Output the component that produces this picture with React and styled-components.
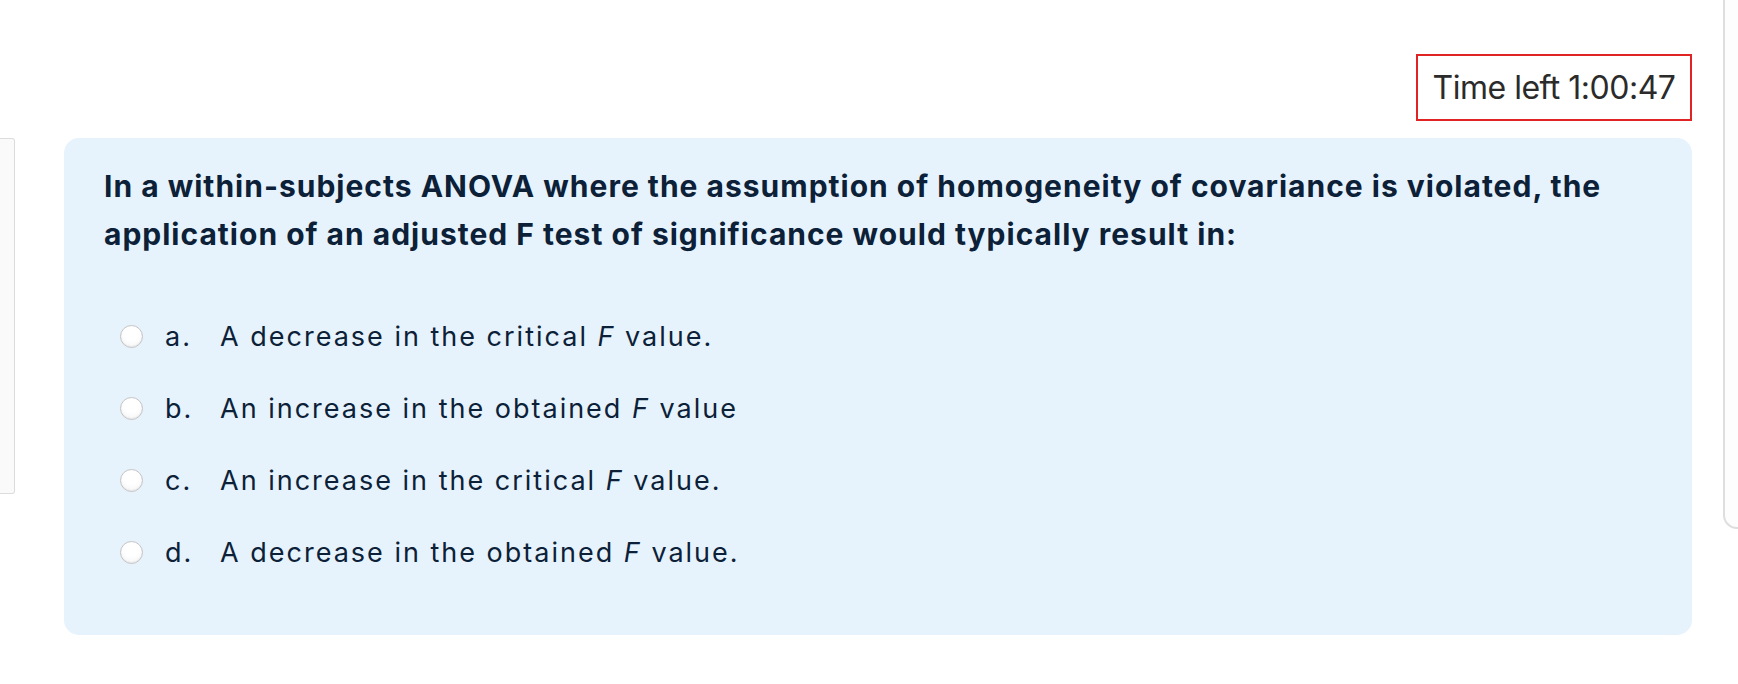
import React from 'react';
import styled, { createGlobalStyle } from 'styled-components';

const GlobalStyle = createGlobalStyle`
  html, body {
    margin: 0;
    padding: 0;
    background: #ffffff;
  }
  body {
    font-family: Inter, "Noto Sans", sans-serif;
  }
`;

const Page = styled.div`
  display: flex;
  align-items: flex-start;
  width: 100%;
  height: 684px;
  overflow: hidden;
`;

const DrawerStub = styled.div`
  flex: 0 0 14px;
  height: 354px;
  margin-top: 138px;
  background: #fafafa;
  border: 1px solid #dcdcdc;
  border-left: none;
  border-radius: 0 3px 3px 0;
`;

const Main = styled.main`
  flex: 1;
  display: flex;
  flex-direction: column;
  align-items: stretch;
  padding: 54px 31px 0 49px;
`;

const TimerRow = styled.div`
  display: flex;
  justify-content: flex-end;
  margin-bottom: 17px;
`;

const Timer = styled.div`
  width: 276px;
  height: 67px;
  box-sizing: border-box;
  border: 2px solid #e02424;
  display: flex;
  align-items: center;
  justify-content: center;
  color: #2b2b2b;
  font-size: 32px;
  letter-spacing: -0.5px;
`;

const QuestionCard = styled.section`
  background: #e6f3fd;
  border-radius: 15px;
  padding: 24px 40px 48px 40px;
  height: 497px;
  box-sizing: border-box;
`;

const QuestionText = styled.p`
  margin: 0 0 57px;
  color: #0c2138;
  font-size: 30px;
  font-weight: 700;
  line-height: 48px;
  letter-spacing: 1px;
`;

const Options = styled.div`
  display: flex;
  flex-direction: column;
  gap: 30px;
`;

const Option = styled.label`
  display: flex;
  align-items: center;
  height: 42px;
  padding-left: 16px;
  color: #0c2138;
  font-size: 27px;
  letter-spacing: 2px;
`;

const Radio = styled.span`
  flex: 0 0 auto;
  width: 21px;
  height: 21px;
  border-radius: 50%;
  border: 1px solid #c4c4c4;
  background: radial-gradient(circle at 50% 35%, #ffffff 40%, #f1f1f1 100%);
  box-shadow: inset 0 -1px 1px rgba(0, 0, 0, 0.06);
`;

const Letter = styled.span`
  width: 55px;
  margin-left: 22px;
`;

const OptionText = styled.span`
  i {
    font-style: italic;
  }
`;

const RightStub = styled.div`
  flex: 0 0 13px;
  height: 527px;
  border-left: 2px solid #dedede;
  border-bottom: 2px solid #dedede;
  border-bottom-left-radius: 14px;
  background: #fdfdfd;
`;

const options = [
  { letter: 'a.', before: 'A decrease in the critical ', after: ' value.' },
  { letter: 'b.', before: 'An increase in the obtained ', after: ' value' },
  { letter: 'c.', before: 'An increase in the critical ', after: ' value.' },
  { letter: 'd.', before: 'A decrease in the obtained ', after: ' value.' },
];

export default function App() {
  return (
    <>
      <GlobalStyle />
      <Page>
        <DrawerStub />
        <Main>
          <TimerRow>
            <Timer>Time left 1:00:47</Timer>
          </TimerRow>
          <QuestionCard>
            <QuestionText>
              In a within-subjects ANOVA where the assumption of homogeneity of covariance is violated, the
              application of an adjusted F test of significance would typically result in:
            </QuestionText>
            <Options>
              {options.map((o) => (
                <Option key={o.letter}>
                  <Radio />
                  <Letter>{o.letter}</Letter>
                  <OptionText>
                    {o.before}
                    <i>F</i>
                    {o.after}
                  </OptionText>
                </Option>
              ))}
            </Options>
          </QuestionCard>
        </Main>
        <RightStub />
      </Page>
    </>
  );
}
